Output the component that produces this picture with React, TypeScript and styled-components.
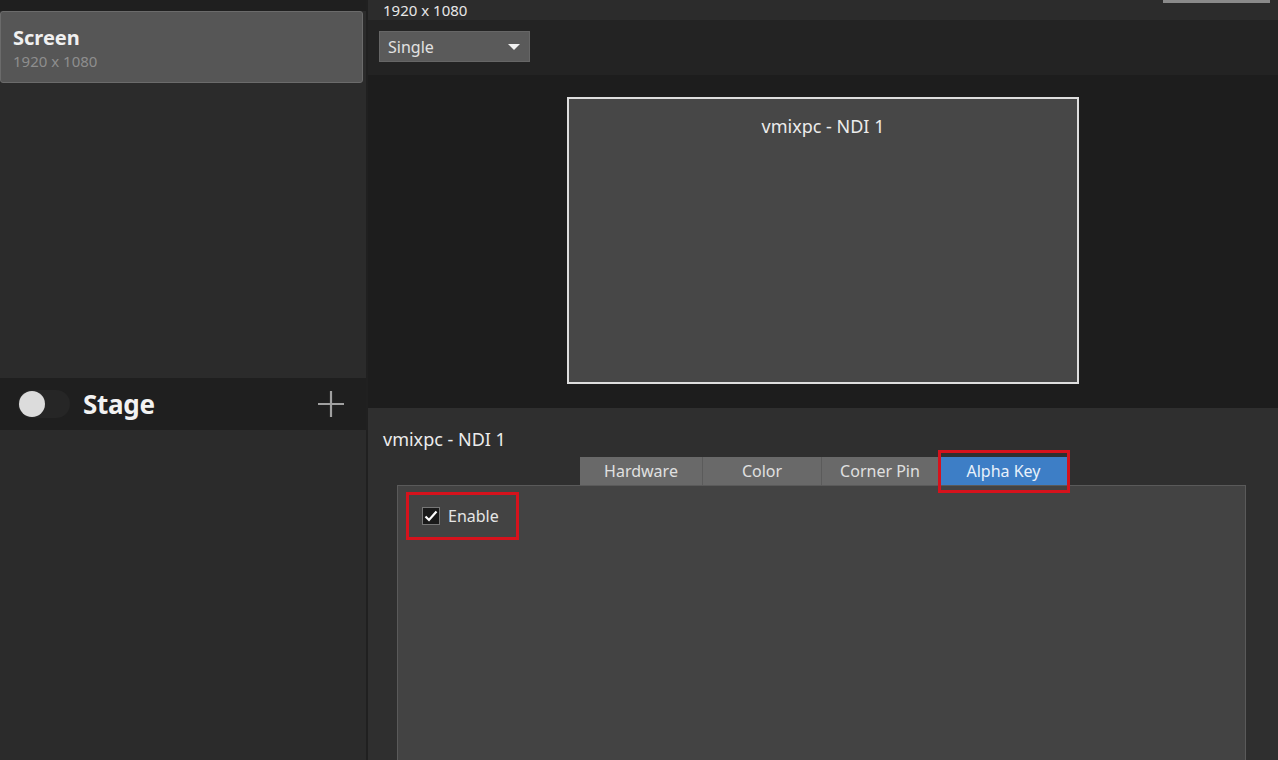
import styled, { createGlobalStyle } from 'styled-components';

const GlobalStyle = createGlobalStyle`
  html, body {
    margin: 0;
    padding: 0;
    background: #1d1d1d;
  }
  body {
    font-family: 'Noto Sans', 'Open Sans', sans-serif;
    color: #e6e6e6;
  }
`;

const Page = styled.div`
  display: flex;
  width: 1278px;
  height: 760px;
  overflow: hidden;
`;

const Sidebar = styled.aside`
  width: 366px;
  flex-shrink: 0;
  display: flex;
  flex-direction: column;
  background: #2b2b2b;
  border-right: 2px solid #202020;
`;

const SideTop = styled.div`
  height: 11px;
  background: #1f1f1f;
`;

const ScreenCard = styled.div`
  height: 72px;
  margin-right: 3px;
  padding: 13px 12px 0;
  box-sizing: border-box;
  background: #565656;
  border: 1px solid #6b6b6b;
  border-radius: 3px;
`;

const CardTitle = styled.div`
  font-size: 20px;
  font-weight: 700;
  line-height: 26px;
  color: #f0f0f0;
`;

const CardSub = styled.div`
  font-size: 15px;
  line-height: 20px;
  color: #8e8e8e;
`;

const SideBody = styled.div<{ $grow?: boolean }>`
  flex: ${({ $grow }) => ($grow ? 1 : 'none')};
  height: ${({ $grow }) => ($grow ? 'auto' : '293px')};
  background: #2b2b2b;
`;

const StageRow = styled.div`
  height: 52px;
  margin-top: 2px;
  display: flex;
  align-items: center;
  padding: 0 18px;
  background: #1f1f1f;
`;

const Toggle = styled.div`
  width: 52px;
  height: 28px;
  border-radius: 14px;
  background: #262626;
  display: flex;
  align-items: center;
  padding-left: 1px;
  box-sizing: border-box;
`;

const Knob = styled.div`
  width: 26px;
  height: 26px;
  border-radius: 50%;
  background: #dcdcdc;
`;

const StageLabel = styled.div`
  flex: 1;
  margin-left: 13px;
  font-size: 26px;
  font-weight: 700;
  letter-spacing: -0.3px;
  color: #f2f2f2;
`;

const AddIcon = styled.svg`
  width: 30px;
  height: 30px;
  margin-right: 2px;
`;

const Main = styled.main`
  flex: 1;
  display: flex;
  flex-direction: column;
  min-width: 0;
`;

const Header = styled.div`
  height: 20px;
  display: flex;
  justify-content: space-between;
  align-items: flex-start;
  padding-left: 15px;
  background: #2c2c2c;
`;

const HeaderText = styled.div`
  font-size: 15px;
  line-height: 20px;
  color: #e8e8e8;
`;

const HeaderButton = styled.div`
  width: 107px;
  height: 3px;
  margin-right: 8px;
  background: #8a8a8a;
`;

const Toolbar = styled.div`
  height: 55px;
  padding: 11px 11px 0;
  box-sizing: border-box;
  background: #232323;
`;

const Dropdown = styled.div`
  width: 151px;
  height: 31px;
  display: flex;
  align-items: center;
  justify-content: space-between;
  padding: 0 9px 0 8px;
  box-sizing: border-box;
  background: #5a5a5a;
  border: 1px solid #666;
  font-size: 16px;
  color: #e2e2e2;
`;

const Caret = styled.svg`
  width: 12px;
  height: 8px;
`;

const PreviewArea = styled.div`
  height: 333px;
  display: flex;
  justify-content: center;
  padding-top: 22px;
  box-sizing: border-box;
  background: #1d1d1d;
`;

const PreviewBox = styled.div`
  width: 512px;
  height: 287px;
  box-sizing: border-box;
  background: #474747;
  border: 2px solid #dedede;
  text-align: center;
  padding-top: 15px;
  font-size: 18px;
  color: #ececec;
`;

const Lower = styled.div`
  flex: 1;
  display: flex;
  flex-direction: column;
  padding: 19px 32px 0 15px;
  background: #2f2f2f;
`;

const InputName = styled.div`
  font-size: 18px;
  line-height: 24px;
  color: #ececec;
`;

const TabRow = styled.div`
  display: flex;
  margin: 6px 0 0 197px;
`;

const Tab = styled.div<{ $width: number; $active?: boolean }>`
  position: relative;
  width: ${({ $width }) => $width}px;
  height: 28px;
  display: flex;
  align-items: center;
  justify-content: center;
  box-sizing: border-box;
  font-size: 16px;
  color: ${({ $active }) => ($active ? '#e8f1fb' : '#e0e0e0')};
  background: ${({ $active }) => ($active ? '#3d7ec6' : '#696969')};
  border-right: 1px solid ${({ $active }) => ($active ? '#3d7ec6' : '#5b5b5b')};
  margin-left: ${({ $active }) => ($active ? '2px' : '0')};

  ${({ $active }) =>
    $active &&
    `
    &::after {
      content: '';
      position: absolute;
      top: -7px;
      bottom: -8px;
      left: -3px;
      right: -4px;
      border: 3px solid #d6121c;
    }
  `}
`;

const TabContent = styled.div`
  flex: 1;
  margin-left: 14px;
  padding: 19px 0 0 24px;
  background: #434343;
  border: 1px solid #5a5a5a;
  border-bottom: none;
`;

const CheckRow = styled.label`
  position: relative;
  display: inline-flex;
  align-items: center;
  gap: 8px;
  font-size: 16px;
  color: #e6e6e6;

  &::after {
    content: '';
    position: absolute;
    top: -13px;
    bottom: -13px;
    left: -16px;
    right: -20px;
    border: 3px solid #d6121c;
  }
`;

const CheckBox = styled.span`
  width: 18px;
  height: 18px;
  display: flex;
  align-items: center;
  justify-content: center;
  box-sizing: border-box;
  background: #1a1a1a;
  border: 1px solid #777;
`;

const tabs = [
  { label: 'Hardware', width: 123 },
  { label: 'Color', width: 119 },
  { label: 'Corner Pin', width: 117 },
  { label: 'Alpha Key', width: 126, active: true },
];

export default function App() {
  return (
    <>
      <GlobalStyle />
      <Page>
        <Sidebar>
          <SideTop />
          <ScreenCard>
            <CardTitle>Screen</CardTitle>
            <CardSub>1920 x 1080</CardSub>
          </ScreenCard>
          <SideBody />
          <StageRow>
            <Toggle>
              <Knob />
            </Toggle>
            <StageLabel>Stage</StageLabel>
            <AddIcon viewBox="0 0 30 30">
              <path d="M15 2v26M2 15h26" stroke="#a0a0a0" strokeWidth="2.2" />
            </AddIcon>
          </StageRow>
          <SideBody $grow />
        </Sidebar>
        <Main>
          <Header>
            <HeaderText>1920 x 1080</HeaderText>
            <HeaderButton />
          </Header>
          <Toolbar>
            <Dropdown>
              Single
              <Caret viewBox="0 0 12 8">
                <path d="M0 1h12L6 7z" fill="#f2f2f2" />
              </Caret>
            </Dropdown>
          </Toolbar>
          <PreviewArea>
            <PreviewBox>vmixpc - NDI 1</PreviewBox>
          </PreviewArea>
          <Lower>
            <InputName>vmixpc - NDI 1</InputName>
            <TabRow>
              {tabs.map((t) => (
                <Tab key={t.label} $width={t.width} $active={t.active}>
                  {t.label}
                </Tab>
              ))}
            </TabRow>
            <TabContent>
              <CheckRow>
                <CheckBox>
                  <svg width="14" height="12" viewBox="0 0 14 12">
                    <path d="M1.5 6.5l3.5 3.5 7.5-8.5" fill="none" stroke="#fff" strokeWidth="2.2" />
                  </svg>
                </CheckBox>
                Enable
              </CheckRow>
            </TabContent>
          </Lower>
        </Main>
      </Page>
    </>
  );
}
